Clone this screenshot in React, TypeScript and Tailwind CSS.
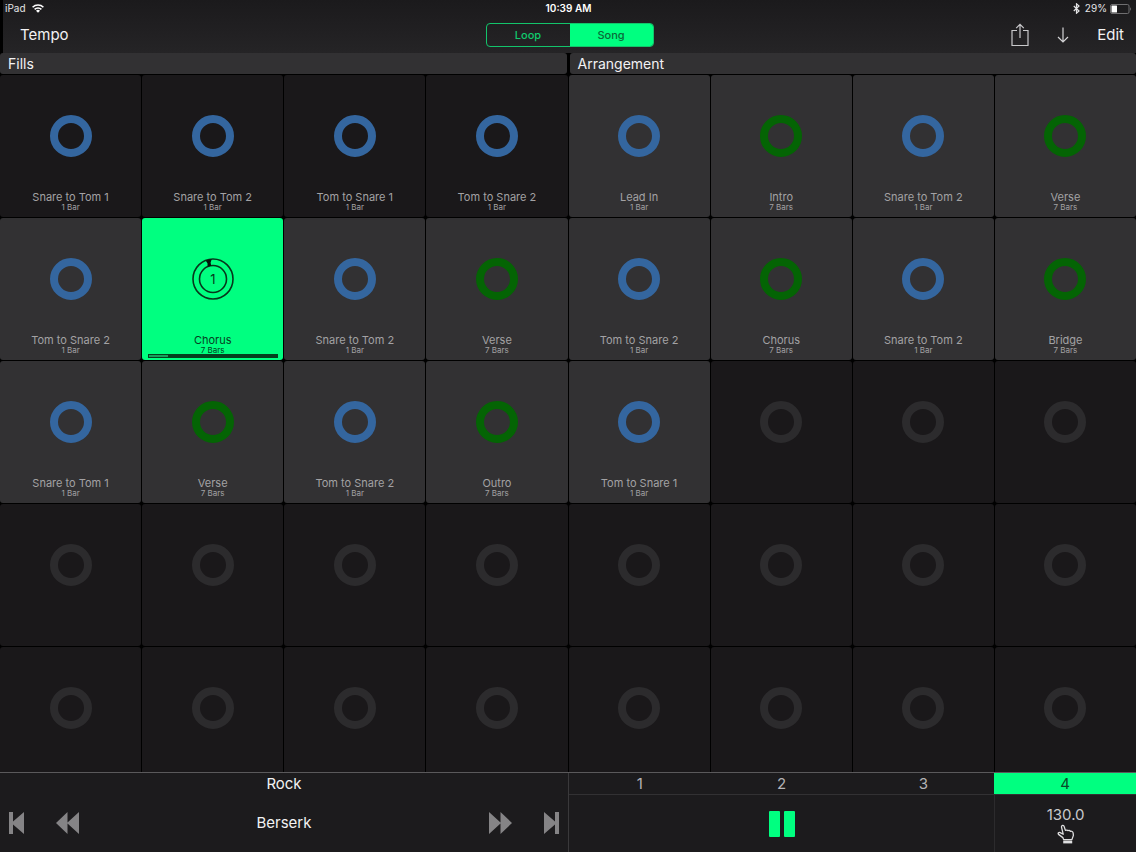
type Kind = "fill" | "part" | "empty" | "active";

interface Clip {
  name: string;
  bars: number;
  kind: Kind;
}

const bar = (name: string): Clip => ({ name, bars: 1, kind: "fill" });
const section = (name: string): Clip => ({ name, bars: 7, kind: "part" });
const empties = (count: number): Clip[] =>
  Array.from({ length: count }, () => ({ name: "", bars: 0, kind: "empty" as Kind }));

const fills: Clip[] = [
  bar("Snare to Tom 1"),
  bar("Snare to Tom 2"),
  bar("Tom to Snare 1"),
  bar("Tom to Snare 2"),
];

const arrangement: Clip[] = [
  bar("Lead In"),
  section("Intro"),
  bar("Snare to Tom 2"),
  section("Verse"),
  bar("Tom to Snare 2"),
  { name: "Chorus", bars: 7, kind: "active" },
  bar("Snare to Tom 2"),
  section("Verse"),
  bar("Tom to Snare 2"),
  section("Chorus"),
  bar("Snare to Tom 2"),
  section("Bridge"),
  bar("Snare to Tom 1"),
  section("Verse"),
  bar("Tom to Snare 2"),
  section("Outro"),
  bar("Tom to Snare 1"),
  ...empties(19),
];

const ringColor: Record<string, string> = {
  fill: "border-[#34669f]",
  part: "border-[#046404]",
  empty: "border-[#2c2b2d]",
};

function Tile({ clip, dark }: { clip: Clip; dark: boolean }) {
  const active = clip.kind === "active";
  const surface = active
    ? "bg-[#00ff80] text-[#06401f]"
    : dark || clip.kind === "empty"
      ? "bg-[#1a181a] text-[#a3a2a4]"
      : "bg-[#323133] text-[#a3a2a4]";
  return (
    <button
      type="button"
      aria-label={clip.name || "Empty slot"}
      className={`flex h-[142px] min-w-0 flex-col items-center rounded-[3px] pt-10 ${surface}`}
    >
      {active ? (
        <svg viewBox="0 0 42 42" className="size-[42px] shrink-0" fill="none" stroke="#07361b" strokeWidth="1.6">
          <circle cx="21" cy="21" r="20" />
          <circle cx="21" cy="21" r="13.5" />
          <path d="M13.6 2.4 L19.8 1 L18.6 4.4 L19.2 7.8 L15.6 8.8 L15.5 5.2Z" fill="#04150b" stroke="none" />
          <text
            x="21"
            y="26"
            textAnchor="middle"
            fontSize="13"
            fill="#07361b"
            stroke="none"
          >
            1
          </text>
        </svg>
      ) : (
        <span className={`size-[42px] shrink-0 rounded-full border-8 ${ringColor[clip.kind]}`} />
      )}
      {clip.name && (
        <>
          <span className="mt-[34px] text-[11px] leading-[12px]">{clip.name}</span>
          <span className="text-[8px] leading-[8px]">
            {clip.bars} {clip.bars === 1 ? "Bar" : "Bars"}
          </span>
        </>
      )}
      {active && (
        <span className="h-1 w-[130px] shrink-0 bg-[#04401f] p-px">
          <span className="block h-full w-[15%] bg-[#19a05c]" />
        </span>
      )}
    </button>
  );
}

function StatusBar() {
  return (
    <div className="grid h-[17px] grid-cols-3 items-center pl-[2px] pr-1 text-[10px] text-[#e4e4e6]">
      <div className="flex items-center gap-[6px]">
        <span>iPad</span>
        <svg viewBox="0 0 12 9" className="h-[9px] w-3" fill="none" stroke="#ffffff" strokeWidth="1.6">
          <path d="M0.6 3.3 A7.6 7.6 0 0 1 11.4 3.3" />
          <path d="M2.6 5.4 A4.8 4.8 0 0 1 9.4 5.4" />
          <path d="M6 8.8 L4 6.7 A2.9 2.9 0 0 1 8 6.7Z" fill="#ffffff" stroke="none" />
        </svg>
      </div>
      <div className="text-center font-semibold text-white">10:39 AM</div>
      <div className="flex items-center justify-end">
        <svg viewBox="0 0 7 11" className="mr-[5px] h-[11px] w-[7px]" fill="none" stroke="#e4e4e6" strokeWidth="1.2">
          <path d="M0.8 3 L6 8 L3.5 10.2 V0.8 L6 3 L0.8 8" />
        </svg>
        <span className="mr-[3px]">29%</span>
        <svg viewBox="0 0 22 10" className="h-[10px] w-[22px]">
          <rect x="0.5" y="0.5" width="18.5" height="9" rx="1.5" fill="none" stroke="#6f6e70" />
          <rect x="1.5" y="1.5" width="5.5" height="7" rx="0.5" fill="#ffffff" />
          <path d="M20 3.2 A2.2 2.2 0 0 1 20 6.8Z" fill="#6f6e70" />
        </svg>
      </div>
    </div>
  );
}

function Toolbar() {
  return (
    <div className="grid h-9 grid-cols-[1fr_168px_1fr] items-center text-[15px] text-[#f2f2f3]">
      <button type="button" className="justify-self-start pl-[17px]">
        Tempo
      </button>
      <div className="flex h-6 overflow-hidden rounded-[4px] border border-[#13c46b] text-[11px] font-medium">
        <button type="button" aria-pressed="false" className="flex-1 text-[#10c96c]">
          Loop
        </button>
        <button type="button" aria-pressed="true" className="flex-1 bg-[#00ff80] text-[#0a6a38]">
          Song
        </button>
      </div>
      <div className="flex items-center justify-end pr-3">
        <button type="button" aria-label="Share">
          <svg viewBox="0 0 18 24" className="h-6 w-[18px]" fill="none" stroke="#c9c9cb" strokeWidth="1.2">
            <path d="M6 7.5 H1 V22.5 H17 V7.5 H12" />
            <path d="M9 15 V1.5 M5.2 5.2 L9 1.4 L12.8 5.2" />
          </svg>
        </button>
        <button type="button" aria-label="Download" className="ml-7">
          <svg viewBox="0 0 12 16" className="h-4 w-3" fill="none" stroke="#d4d4d6" strokeWidth="1.2">
            <path d="M6 0.5 V15 M1 10 L6 15 L11 10" />
          </svg>
        </button>
        <button type="button" className="ml-7">
          Edit
        </button>
      </div>
    </div>
  );
}

function Transport() {
  return (
    <footer className="grid shrink-0 grid-cols-2 border-t border-[#5a595b] bg-[#1c1b1d]">
      <div className="flex h-[79px] flex-col text-[15px] text-[#f2f2f3]">
        <div className="h-[21px] text-center leading-[22px]">Rock</div>
        <div className="flex h-[58px] items-center px-[9px]">
          <button type="button" aria-label="First song">
            <svg viewBox="0 0 15 22" className="h-[22px] w-[15px]" fill="#858486">
              <path d="M0 0 H4 V9.5 L15 0 V22 L4 12.5 V22 H0Z" />
            </svg>
          </button>
          <button type="button" aria-label="Previous song" className="ml-8">
            <svg viewBox="0 0 23 22" className="h-[22px] w-[23px]" fill="#858486">
              <path d="M0 11 L11.5 0 V10.5 L23 0 V22 L11.5 11.5 V22Z" />
            </svg>
          </button>
          <div className="flex-1 text-center">Berserk</div>
          <button type="button" aria-label="Next song" className="mr-8">
            <svg viewBox="0 0 23 22" className="h-[22px] w-[23px]" fill="#858486">
              <path d="M23 11 L11.5 0 V10.5 L0 0 V22 L11.5 11.5 V22Z" />
            </svg>
          </button>
          <button type="button" aria-label="Last song">
            <svg viewBox="0 0 15 22" className="h-[22px] w-[15px]" fill="#858486">
              <path d="M15 0 H11 V9.5 L0 0 V22 L11 12.5 V22 H15Z" />
            </svg>
          </button>
        </div>
      </div>
      <div className="flex flex-col border-l border-[#3a393b]">
        <div className="grid h-[22px] grid-cols-4 border-b border-[#323133] text-[15px] leading-[21px] text-[#b4b3b5]">
          {["1", "2", "3"].map((page) => (
            <button key={page} type="button">
              {page}
            </button>
          ))}
          <button type="button" aria-pressed="true" className="bg-[#00ff80] text-[#0a4a28]">
            4
          </button>
        </div>
        <div className="grid flex-1 grid-cols-4">
          <button type="button" aria-label="Pause" className="col-span-3 flex items-center justify-center">
            <svg viewBox="0 0 26 26" className="size-[26px]" fill="#00ff80">
              <rect width="11" height="26" rx="1" />
              <rect x="15" width="11" height="26" rx="1" />
            </svg>
          </button>
          <button
            type="button"
            className="flex flex-col items-center border-l border-[#2c2b2d] pt-[11px] text-[15px] leading-[18px] text-[#c9c9cb]"
          >
            130.0
            <svg viewBox="0 0 18 20" className="h-5 w-[18px]" fill="none" stroke="#dededf" strokeWidth="1.3" strokeLinejoin="round">
              <path d="M6.6 15.6 L5.9 13.6 L1.5 10.4 C0.6 9.2 1.9 8 3.2 8.6 L6.2 10.2 L4.5 3.2 C4.3 1.2 6.7 0.8 7.2 2.6 L8.4 6.4 C9.2 5.8 10.4 6 10.9 6.7 C11.8 6.3 12.9 6.5 13.4 7.3 C14.6 7 15.8 7.6 16.1 8.8 L16.4 11.4 L14.9 15.6Z" />
              <path d="M6.2 16.6 H15.2 V19.4 H6.2Z" fill="#dededf" stroke="none" />
            </svg>
          </button>
        </div>
      </div>
    </footer>
  );
}

export default function App() {
  const tiles = [
    ...fills.map((clip) => ({ clip, dark: true })),
    ...arrangement.map((clip) => ({ clip, dark: false })),
  ];
  return (
    <div className="flex h-screen flex-col bg-black font-['Inter',sans-serif] select-none">
      <header className="shrink-0 border-l-[3px] border-black bg-linear-to-b from-[#1b1a1c] to-[#252426]">
        <StatusBar />
        <Toolbar />
      </header>
      <div className="grid shrink-0 grid-cols-2 gap-[3px] pb-px text-[14px] leading-[21px] text-[#f2f2f3]">
        <h2 className="rounded-[3px] bg-[#323133] pl-2">Fills</h2>
        <h2 className="rounded-[3px] bg-[#323133] pl-2">Arrangement</h2>
      </div>
      <main className="grid min-h-0 flex-1 auto-rows-min grid-cols-8 content-start gap-px overflow-hidden">
        {tiles.map(({ clip, dark }, index) => (
          <Tile key={index} clip={clip} dark={dark} />
        ))}
      </main>
      <Transport />
    </div>
  );
}
